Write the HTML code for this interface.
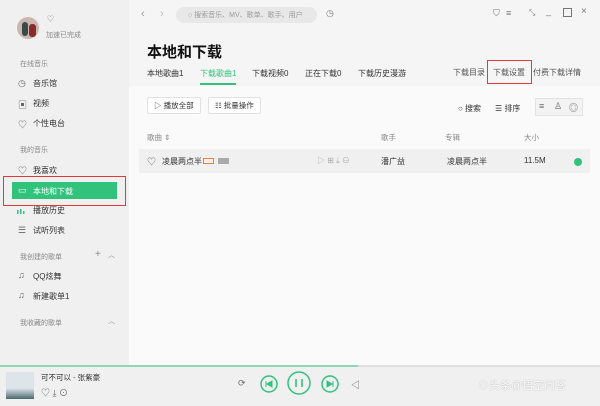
<!DOCTYPE html>
<html><head><meta charset="utf-8"><style>
*{margin:0;padding:0;box-sizing:border-box}
body{width:600px;height:406px;position:relative;overflow:hidden;font-family:"Liberation Sans","Noto Sans CJK SC",sans-serif;font-size:8px;color:#333;background:#fafafa}
.a{position:absolute;white-space:nowrap}
.side{left:0;top:0;width:129px;height:365px;background:#f0f0f0}
.head{left:129px;top:0;width:471px;height:86px;background:#f5f5f5}
.g{color:#888;font-size:7px}
.ic{color:#666;font-size:9px}
.btn{background:#fff;border:1px solid #e2e2e2;border-radius:2px;height:17px;line-height:15px;padding:0 6px;font-size:7.5px}
</style></head><body>
<div class="a side"></div>
<div class="a head"></div>
<div class="a" style="left:17px;top:17px;width:22px;height:22px;border-radius:50%;background:#c9b7b0"></div>
<div class="a" style="left:22px;top:22px;width:6px;height:14px;background:#3a4a4a;border-radius:3px"></div>
<div class="a" style="left:29px;top:24px;width:7px;height:13px;background:#8a2a2a;border-radius:3px"></div>
<div class="a g" style="left:47px;top:14px">♡</div>
<div class="a g" style="left:46px;top:30px">加速已完成</div>
<div class="a g" style="left:20px;top:59px">在线音乐</div>
<div class="a ic" style="left:18px;top:78px">◷</div><div class="a" style="left:33px;top:78px">音乐馆</div>
<div class="a ic" style="left:18px;top:98px">▣</div><div class="a" style="left:33px;top:98px">视频</div>
<div class="a ic" style="left:18px;top:118px">♡</div><div class="a" style="left:33px;top:118px">个性电台</div>
<div class="a g" style="left:20px;top:145px">我的音乐</div>
<div class="a ic" style="left:18px;top:164px">♡</div><div class="a" style="left:33px;top:165px">我喜欢</div>
<div class="a" style="left:12px;top:182px;width:105px;height:17px;background:#31c27c"></div>
<div class="a" style="left:18px;top:185px;color:#fff;font-size:9px">▭</div>
<div class="a" style="left:33px;top:186px;color:#fff">本地和下载</div>
<div class="a" style="left:3px;top:176px;width:123px;height:30px;border:1.5px solid #e03a3a"></div>
<svg class="a" style="left:17px;top:208px" width="10" height="6"><rect x="0" y="2" width="1.5" height="4" fill="#31c27c"/><rect x="3" y="1" width="1.5" height="5" fill="#31c27c"/><rect x="6" y="3" width="1.5" height="3" fill="#31c27c"/></svg>
<div class="a" style="left:33px;top:205px">播放历史</div>
<div class="a ic" style="left:18px;top:225px">☰</div><div class="a" style="left:33px;top:225px">试听列表</div>
<div class="a g" style="left:20px;top:252px">我创建的歌单</div>
<div class="a g" style="left:95px;top:249px;font-size:10px">+</div><div class="a g" style="left:108px;top:250px">︿</div>
<div class="a ic" style="left:18px;top:270px">♫</div><div class="a" style="left:33px;top:271px">QQ炫舞</div>
<div class="a ic" style="left:18px;top:290px">♫</div><div class="a" style="left:33px;top:291px">新建歌单1</div>
<div class="a g" style="left:20px;top:318px">我收藏的歌单</div><div class="a g" style="left:108px;top:316px">︿</div>
<div class="a" style="left:141px;top:8px;color:#999;font-size:11px">‹</div>
<div class="a" style="left:160px;top:8px;color:#bbb;font-size:11px">›</div>
<div class="a" style="left:176px;top:7px;width:141px;height:16px;border-radius:8px;background:#e8e8e8"></div>
<div class="a" style="left:188px;top:10px;color:#999;font-size:7px">○ 搜索音乐、MV、歌单、歌手、用户</div>
<div class="a" style="left:326px;top:8px;color:#777;font-size:9px">◷</div>
<div class="a" style="left:493px;top:8px;color:#777;font-size:9px">⛉</div>
<div class="a" style="left:506px;top:8px;color:#777;font-size:9px">≡</div>
<div class="a" style="left:529px;top:8px;color:#777;font-size:8px">⤡</div>
<div class="a" style="left:546px;top:6px;color:#777;font-size:9px">_</div>
<div class="a" style="left:563px;top:8px;width:9px;height:9px;border:1px solid #777"></div>
<div class="a" style="left:581px;top:6px;color:#777;font-size:10px">×</div>
<div class="a" style="left:147px;top:41px;font-size:15px;font-weight:bold;color:#111">本地和下载</div>
<div class="a" style="left:147px;top:68px">本地歌曲1</div>
<div class="a" style="left:200px;top:68px;color:#31c27c">下载歌曲1</div>
<div class="a" style="left:200px;top:83px;width:36px;height:2px;background:#31c27c"></div>
<div class="a" style="left:252px;top:68px">下载视频0</div>
<div class="a" style="left:305px;top:68px">正在下载0</div>
<div class="a" style="left:358px;top:68px">下载历史漫游</div>
<div class="a" style="left:453px;top:67px;color:#555">下载目录</div>
<div class="a" style="left:493px;top:67px;color:#555">下载设置</div>
<div class="a" style="left:487px;top:60px;width:45px;height:24px;border:1.5px solid #e03a3a"></div>
<div class="a" style="left:533px;top:67px;color:#555">付费下载详情</div>
<div class="a btn" style="left:147px;top:97px">▷ 播放全部</div>
<div class="a btn" style="left:208px;top:97px">☷ 批量操作</div>
<div class="a" style="left:458px;top:103px">○ 搜索</div>
<div class="a" style="left:495px;top:103px">☰ 排序</div>
<div class="a" style="left:535px;top:98px;width:48px;height:18px;border:1px solid #e2e2e2;background:#f3f3f3"></div>
<div class="a ic" style="left:539px;top:101px">≡</div><div class="a ic" style="left:554px;top:101px">♙</div><div class="a ic" style="left:569px;top:101px">◎</div>
<div class="a g" style="left:147px;top:132px;font-size:7.5px">歌曲 ⇕</div>
<div class="a g" style="left:381px;top:132px;font-size:7.5px">歌手</div>
<div class="a g" style="left:445px;top:132px;font-size:7.5px">专辑</div>
<div class="a g" style="left:524px;top:132px;font-size:7.5px">大小</div>
<div class="a" style="left:139px;top:149px;width:451px;height:24px;background:#f0f0f0"></div>
<div class="a ic" style="left:147px;top:155px">♡</div>
<div class="a" style="left:162px;top:156px">凌晨两点半</div>
<div class="a" style="left:203px;top:158px;width:11px;height:6px;border:1px solid #f08030"></div>
<div class="a" style="left:218px;top:158px;width:11px;height:6px;background:#aaa"></div>
<div class="a" style="left:317px;top:155px;color:#aaa;font-size:8px">▷ ⊞ ⤓ ⊖</div>
<div class="a" style="left:381px;top:156px">潘广益</div>
<div class="a" style="left:447px;top:156px">凌晨两点半</div>
<div class="a" style="left:524px;top:156px">11.5M</div>
<div class="a" style="left:574px;top:158px;width:8px;height:8px;border-radius:50%;background:#31c27c"></div>
<div class="a" style="left:0;top:366px;width:600px;height:40px;background:#f0f0f0"></div>
<div class="a" style="left:0;top:365px;width:600px;height:2px;background:#e0e0e0"></div>
<div class="a" style="left:0;top:365px;width:358px;height:2px;background:#8fd8b4"></div>
<div class="a" style="left:6px;top:372px;width:28px;height:27px;background:linear-gradient(#dde4ea 60%,#4a6a70)"></div>
<div class="a" style="left:41px;top:372px;font-size:7.5px">可不可以 - 张紫豪</div>
<div class="a ic" style="left:41px;top:386px">♡ ⤓ ⊙</div>
<div class="a ic" style="left:238px;top:378px">⟳</div>
<svg class="a" style="left:260px;top:370px" width="90" height="30">
<circle cx="9" cy="14" r="8" fill="none" stroke="#31c27c" stroke-width="1.5"/>
<path d="M6 11v6M12 11l-5 3 5 3z" fill="#31c27c" stroke="#31c27c" stroke-width="1"/>
<circle cx="39" cy="13" r="11" fill="none" stroke="#31c27c" stroke-width="1.5"/>
<path d="M36 9v8M42 9v8" stroke="#31c27c" stroke-width="1.6"/>
<circle cx="70" cy="14" r="8" fill="none" stroke="#31c27c" stroke-width="1.5"/>
<path d="M73 11v6M67 11l5 3-5 3z" fill="#31c27c" stroke="#31c27c" stroke-width="1"/>
</svg>
<div class="a ic" style="left:351px;top:378px">◁</div>
<div class="a" style="left:478px;top:377px;color:#fff;font-size:11px;text-shadow:0 0 1px #999">⊙头条@悟空问答</div>
</body></html>
